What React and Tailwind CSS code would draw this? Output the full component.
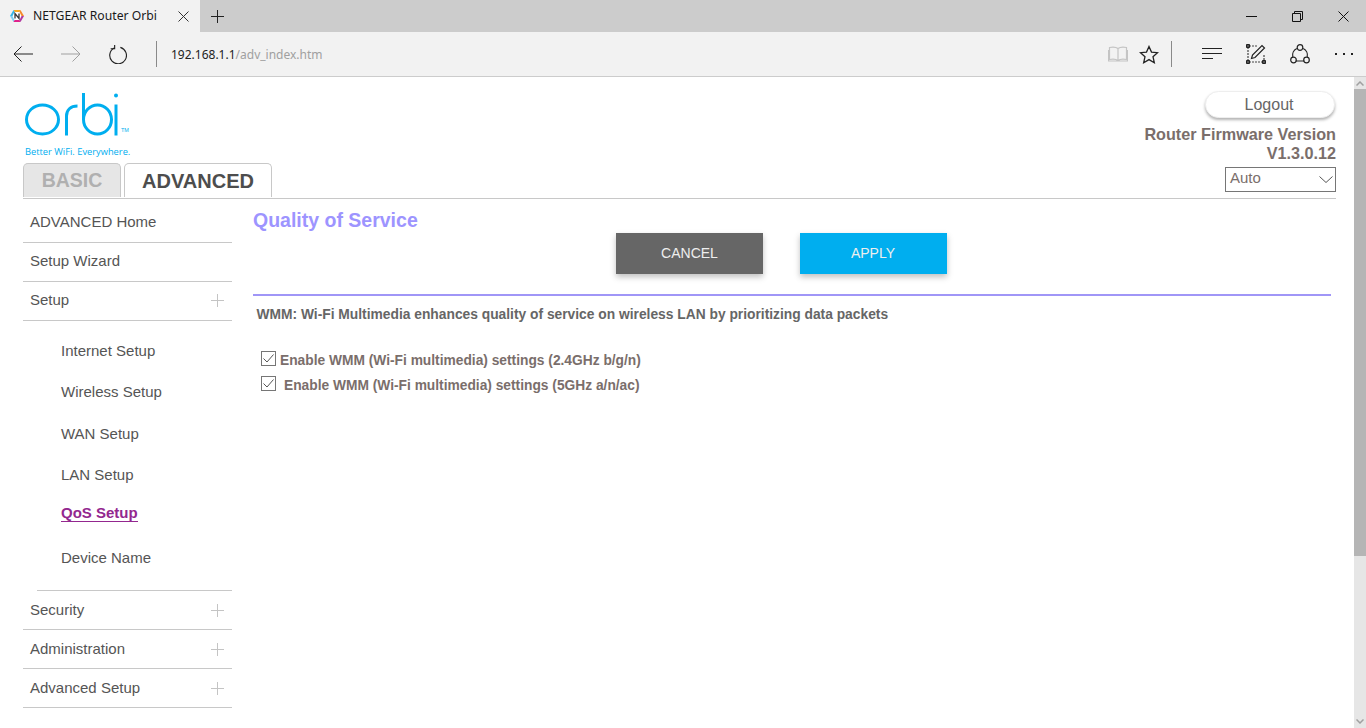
import React from 'react';

const mainItems = ['ADVANCED Home', 'Setup Wizard'];
const subItems = [
  { label: 'Internet Setup', className: 'h-[41px]' },
  { label: 'Wireless Setup', className: 'h-[41px]' },
  { label: 'WAN Setup', className: 'h-[42px]' },
  { label: 'LAN Setup', className: 'h-[41px]' },
];
const bottomItems = ['Security', 'Administration', 'Advanced Setup'];

const Plus = () => (
  <svg width="13" height="13" viewBox="0 0 13 13" className="mr-[8px]">
    <path d="M6.500 0v13M0 6.500h13" stroke="#c4c4c4" strokeWidth="1" fill="none" />
  </svg>
);

const NavRow = ({ label, plus, top }) => (
  <div className={`flex h-[39px] items-center justify-between border-b border-[#c8c8c8] pl-[7px] text-[15px] text-[#555555] ${top ? 'pb-[2px]' : ''}`}>
    <span>{label}</span>
    {plus && <Plus />}
  </div>
);

const OrbiLogo = () => (
  <svg width="106" height="44" viewBox="0 0 106 44" fill="none" stroke="#00aeef" strokeWidth="3">
    <ellipse cx="17.5" cy="26.500" rx="16" ry="14.500" />
    <path d="M41.500 42.500V23c0-6 4-10 11-10" />
    <path d="M58.500 0v26.500" />
    <ellipse cx="72.500" cy="26.500" rx="14" ry="14.500" />
    <path d="M91 11.500v31" />
    <circle cx="91" cy="2.500" r="2" fill="#00aeef" stroke="none" />
  </svg>
);

const TitleBar = () => (
  <div className="flex h-8 bg-[#cccccc]">
    <div className="flex w-[200px] items-center bg-[#f2f2f2] pl-[10px]">
      <svg width="14" height="14" viewBox="0 0 14 14">
        <path d="M3.500 1h7L7 7z" fill="#f7a823" />
        <path d="M10.500 1L14 7H7z" fill="#f58a2c" />
        <path d="M3.500 1L0 7h7z" fill="#35b6e6" />
        <path d="M0 7l3.500 6L7 7z" fill="#7fd0f0" />
        <path d="M3.500 13h7L7 7z" fill="#e0218a" />
        <path d="M14 7l-3.500 6L7 7z" fill="#b03aa0" />
        <path d="M4.500 3h5l2 4-2 4h-5l-2-4z" fill="#ffffff" />
        <path d="M5 9.500v-5l4 5v-5" stroke="#333333" strokeWidth="1.300" fill="none" />
      </svg>
      <span className="ml-[9px] font-['Noto_Sans',sans-serif] text-[12.200px] text-[#1a1a1a]">NETGEAR Router Orbi</span>
      <svg width="11" height="11" viewBox="0 0 11 11" className="ml-[21px]">
        <path d="M0.500 0.500l10 10M10.500 0.500l-10 10" stroke="#333333" strokeWidth="1" fill="none" />
      </svg>
    </div>
    <div className="flex w-[34px] items-center justify-center">
      <svg width="13" height="13" viewBox="0 0 13 13">
        <path d="M6.500 0v13M0 6.500h13" stroke="#222222" strokeWidth="1" fill="none" />
      </svg>
    </div>
    <div className="ml-auto flex items-center">
      <div className="flex w-[46px] justify-center">
        <svg width="11" height="11" viewBox="0 0 11 11"><path d="M0 5.500h11" stroke="#111111" fill="none" /></svg>
      </div>
      <div className="flex w-[46px] justify-center">
        <svg width="11" height="11" viewBox="0 0 11 11"><path d="M0.500 2.500h8v8h-8zM2.500 2.500v-2h8v8h-2" stroke="#111111" fill="none" /></svg>
      </div>
      <div className="flex w-[46px] justify-center">
        <svg width="11" height="11" viewBox="0 0 11 11"><path d="M0.500 0.500l10 10M10.500 0.500l-10 10" stroke="#111111" fill="none" /></svg>
      </div>
    </div>
  </div>
);

const Toolbar = () => (
  <div className="flex h-[45px] items-center border-b border-[#cccccc] bg-[#f2f2f2]">
    <svg width="20" height="16" viewBox="0 0 20 16" className="ml-[13px]" fill="none" stroke="#222222">
      <path d="M20 8H1M8.500 0.500L1 8l7.500 7.500" />
    </svg>
    <svg width="20" height="16" viewBox="0 0 20 16" className="ml-[28px]" fill="none" stroke="#a0a0a0">
      <path d="M0 8h19M11.500 0.500L19 8l-7.500 7.500" />
    </svg>
    <svg width="19" height="19" viewBox="0 0 20 20" className="ml-[27px]" fill="none" stroke="#222222" strokeWidth="1.200">
      <path d="M6.500 3.200A8.800 8.800 0 1 0 13 2.500" />
      <path d="M7 0v4H2.800" />
    </svg>
    <div className="ml-[29px] h-[26px] w-px bg-[#8a8a8a]" />
    <div className="ml-[14px] pt-[2px] font-['Noto_Sans',sans-serif] text-[12px]">
      <span className="text-[#222222]">192.168.1.1</span>
      <span className="text-[#a0a0a0]">/adv_index.htm</span>
    </div>
    <div className="ml-auto flex items-center">
      <svg width="20" height="16" viewBox="0 0 20 16" fill="none" stroke="#c4c4c4" strokeWidth="1.200">
        <path d="M10 2.500C8 1 4 1 1.500 1.500v12c2.500-.5 6.500-.5 8.500 1 2-1.500 6-1.500 8.500-1v-12C16 1 12 1 10 2.500zM10 2.500v12M0.500 4v11h19V4" />
      </svg>
      <svg width="20" height="19" viewBox="0 0 20 19" className="ml-[11px]" fill="none" stroke="#222222" strokeWidth="1.300">
        <path d="M10 1.500l2.500 5.600 6 .6-4.500 4 1.300 6L10 14.600l-5.300 3.100 1.300-6-4.500-4 6-.6z" />
      </svg>
      <div className="ml-[12px] h-[26px] w-px bg-[#8a8a8a]" />
      <svg width="20" height="14" viewBox="0 0 20 14" className="ml-[30px]" fill="none" stroke="#222222">
        <path d="M0 1.500h20M0 6.500h20M0 11.500h11" />
      </svg>
      <svg width="20" height="20" viewBox="0 0 20 20" className="ml-[24px]" fill="none">
        <path d="M2 3v14M18 11v6M3 2h9M3 18h14" stroke="#444444" strokeWidth="1.200" strokeDasharray="2 1" />
        <path d="M0.500 0.500h3v3h-3zM0.500 16.500h3v3h-3zM16.500 16.500h3v3h-3z" stroke="#222222" fill="#555555" />
        <path d="M5.500 14.500l1-3.500L16 1.500l2.500 2.500L9 13.500z" stroke="#222222" strokeWidth="1.200" />
      </svg>
      <svg width="20" height="20" viewBox="0 0 20 20" className="ml-[24px]" fill="none" stroke="#222222" strokeWidth="1.200">
        <path d="M6.800 4.500A7.500 7.500 0 0 0 2.800 13M13.200 4.500A7.500 7.500 0 0 1 17.200 13M5.700 17h8.600" />
        <circle cx="10" cy="3.500" r="2.800" />
        <circle cx="3.500" cy="16" r="2.800" />
        <circle cx="16.500" cy="16" r="2.800" />
      </svg>
      <div className="ml-[25px] mr-[13px] flex gap-[6px]">
        <span className="h-[2px] w-[2px] bg-[#222222]" />
        <span className="h-[2px] w-[2px] bg-[#222222]" />
        <span className="h-[2px] w-[2px] bg-[#222222]" />
      </div>
    </div>
  </div>
);

const CheckRow = ({ label, className }) => (
  <div className={`flex items-start ${className}`}>
    <span className="flex h-[15px] w-[15px] items-center justify-center border border-[#767676] bg-white">
      <svg width="11" height="9" viewBox="0 0 11 9" fill="none" stroke="#555555">
        <path d="M0.500 4.500L4 8l6.500-7.500" />
      </svg>
    </span>
    <span className="mt-[2px] text-[13.770px] font-bold leading-[15px] text-[#7a6e6b]">{label}</span>
  </div>
);

const App = () => (
  <div className="flex h-[728px] w-[1366px] flex-col overflow-hidden bg-white font-['Liberation_Sans',Arial,sans-serif]">
    <TitleBar />
    <Toolbar />
    <div className="flex min-h-0 flex-1">
      <div className="min-w-0 flex-1 pl-[23px] pr-[18px]">
        <div className="flex h-[122px] justify-between border-b border-[#c8c8c8]">
          <div className="flex flex-col">
            <div className="relative ml-[2px] mt-[16px] h-[44px]">
              <OrbiLogo />
              <span className="absolute left-[96px] top-[34px] text-[5.500px] leading-[7px] text-[#00aeef]">TM</span>
            </div>
            <div className="ml-[2px] mt-[9px] whitespace-nowrap font-['Open_Sans',sans-serif] text-[9.300px] leading-[11px] text-[#00aeef]">Better WiFi. Everywhere.</div>
            <div className="mt-[6px] flex items-end">
              <div className="flex h-[34px] w-[98px] items-center justify-center rounded-t-[5px] border border-b-0 border-[#c8c8c8] bg-[#e6e6e6] pt-px text-[19.500px] font-bold text-[#b0b0b0]">BASIC</div>
              <div className="ml-[3px] flex h-[34px] w-[148px] items-center justify-center rounded-t-[5px] border border-b-0 border-[#c8c8c8] bg-white pt-px text-[20px] font-bold text-[#4d4d4d]">ADVANCED</div>
            </div>
          </div>
          <div className="flex flex-col items-end pt-[14px]">
            <button className="mr-px flex h-[27px] w-[130px] items-center justify-center rounded-[14px] border border-[#eeeeee] bg-white pr-[2px] text-[16px] text-[#666666] shadow-[0_2px_3px_rgba(0,0,0,0.3)]">Logout</button>
            <div className="mt-[7px] text-right text-[16.200px] font-bold leading-[19px] text-[#7a6e6b]">
              <div>Router Firmware Version</div>
              <div>V1.3.0.12</div>
            </div>
            <div className="mt-[4px] flex h-[25px] w-[111px] items-center justify-between border border-[#767676] bg-white pl-[4px] pr-[2px] text-[15px] text-[#7a6e6b]">
              <span className="-mt-[3px]">Auto</span>
              <svg width="14" height="7" viewBox="0 0 14 7" fill="none" stroke="#555555"><path d="M0.500 0.500L7 6.500l6.500-6" /></svg>
            </div>
          </div>
        </div>
        <div className="flex gap-[21px]">
          <div className="w-[209px] shrink-0 text-[15px] text-[#555555]">
            <div className="-mt-px pt-[6px]">
              {mainItems.map((label) => <NavRow key={label} label={label} top />)}
              <NavRow label="Setup" plus top />
            </div>
            <div className="pl-[38px] pt-[10px]">
              {subItems.map((item) => (
                <div key={item.label} className={`flex items-center ${item.className}`}>{item.label}</div>
              ))}
              <div className="flex h-[36px] items-center pb-[2px]">
                <span className="border-b border-[#93278f] text-[15px] font-bold leading-[17px] text-[#93278f]">QoS Setup</span>
              </div>
              <div className="flex h-[53px] items-center">Device Name</div>
            </div>
            <div className="ml-[14px] mt-[5px] border-t border-[#c8c8c8]" />
            {bottomItems.map((label) => <NavRow key={label} label={label} plus />)}
          </div>
          <div className="min-w-0 flex-1 pr-[5px]">
            <h1 className="mt-[9px] text-[19.500px] font-bold leading-[24px] text-[#9d94ff]">Quality of Service</h1>
            <div className="mt-px flex gap-[37px] pl-[363px]">
              <button className="h-[41px] w-[147px] bg-[#666666] text-[14px] text-[#eeeeee] shadow-[0_3px_6px_rgba(0,0,0,0.25)]">CANCEL</button>
              <button className="h-[41px] w-[147px] bg-[#00aeef] pr-px text-[14px] text-[#eeeeee] shadow-[0_3px_6px_rgba(0,0,0,0.25)]">APPLY</button>
            </div>
            <div className="mt-[20px] h-[2px] bg-[#a096f7]" />
            <p className="ml-[3.500px] mt-[11px] text-[13.800px] font-bold leading-[16px] text-[#666666]">WMM: Wi-Fi Multimedia enhances quality of service on wireless LAN by prioritizing data packets</p>
            <div className="ml-[8px] mt-[28px] flex flex-col gap-[8px]">
              <CheckRow label="Enable WMM (Wi-Fi multimedia) settings (2.4GHz b/g/n)" className="gap-[4px]" />
              <CheckRow label="Enable WMM (Wi-Fi multimedia) settings (5GHz a/n/ac)" className="gap-[8px]" />
            </div>
          </div>
        </div>
      </div>
      <div className="flex w-[12px] shrink-0 flex-col bg-[#e6e6e6]">
        <div className="flex h-[12px] items-center justify-center">
          <svg width="8" height="5" viewBox="0 0 8 5" fill="none" stroke="#a0a0a0" strokeWidth="1.500"><path d="M0.500 4.500L4 1l3.500 3.500" /></svg>
        </div>
        <div className="h-[467px] bg-[#b5b5b5]" />
        <div className="mt-auto flex h-[14px] items-center justify-center">
          <svg width="8" height="5" viewBox="0 0 8 5" fill="none" stroke="#a0a0a0" strokeWidth="1.500"><path d="M0.500 0.500L4 4l3.500-3.500" /></svg>
        </div>
      </div>
    </div>
  </div>
);

export default App;
